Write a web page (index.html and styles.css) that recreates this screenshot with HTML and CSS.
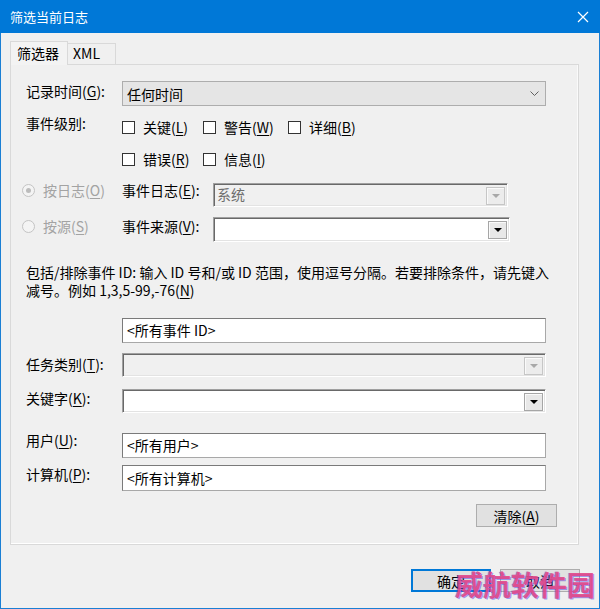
FILE: index.html
```html
<!DOCTYPE html>
<html lang="zh-CN">
<head>
<meta charset="utf-8">
<title>筛选当前日志</title>
<link rel="stylesheet" href="styles.css">
</head>
<body>
<div class="window">
  <div class="titlebar">
    <span class="title">筛选当前日志</span>
    <svg class="close" width="12" height="12" viewBox="0 0 12 12"><path d="M1 1L11 11M11 1L1 11" stroke="#fff" stroke-width="1.2" fill="none"/></svg>
  </div>
  <div class="body">
    <div class="tabs">
      <div class="tab active">筛选器</div>
      <div class="tab">XML</div>
    </div>
    <div class="panel">
      <div class="row r1">
        <span class="lbl">记录时间(<u>G</u>):</span>
        <div class="combo10 w-full"><span>任何时间</span>
          <svg class="chev" width="9" height="5" viewBox="0 0 9 5"><path d="M0.5 0.5L4.5 4.5L8.5 0.5" stroke="#606060" fill="none"/></svg>
        </div>
      </div>
      <div class="row r2">
        <span class="lbl">事件级别:</span>
        <div class="checks">
          <span class="check w81"><span class="cb"></span>关键(<u>L</u>)</span>
          <span class="check w85"><span class="cb"></span>警告(<u>W</u>)</span>
          <span class="check"><span class="cb"></span>详细(<u>B</u>)</span>
        </div>
      </div>
      <div class="row r3">
        <span class="lbl"></span>
        <div class="checks">
          <span class="check w81"><span class="cb"></span>错误(<u>R</u>)</span>
          <span class="check"><span class="cb"></span>信息(<u>I</u>)</span>
        </div>
      </div>
      <div class="row r4">
        <span class="radio-item"><span class="radio checked"></span>按日志(<u>O</u>)</span>
        <span class="lbl2">事件日志(<u>E</u>):</span>
        <div class="combo disabled w-log"><span class="val">系统</span>
          <span class="dd"><svg width="8" height="4" viewBox="0 0 8 4"><path d="M0 0H8L4 4Z" fill="#a8a8a8"/></svg></span>
        </div>
      </div>
      <div class="row r5">
        <span class="radio-item"><span class="radio"></span>按源(<u>S</u>)</span>
        <span class="lbl2">事件来源(<u>V</u>):</span>
        <div class="combo w-src"><span class="val"></span>
          <span class="dd"><svg width="8" height="4" viewBox="0 0 8 4"><path d="M0 0H8L4 4Z" fill="#000"/></svg></span>
        </div>
      </div>
      <p class="para"><span>包括/排除事件 ID: 输入 ID 号和/或 ID 范围，使用逗号分隔。若要排除条件，请先键入</span><br><span>减号。例如 1,3,5-99,-76(<u>N</u>)</span></p>
      <div class="row r6">
        <span class="lbl"></span>
        <div class="input w-full">&lt;所有事件 ID&gt;</div>
      </div>
      <div class="row r7">
        <span class="lbl">任务类别(<u>T</u>):</span>
        <div class="combo disabled w-full"><span class="val"></span>
          <span class="dd"><svg width="8" height="4" viewBox="0 0 8 4"><path d="M0 0H8L4 4Z" fill="#a8a8a8"/></svg></span>
        </div>
      </div>
      <div class="row r8">
        <span class="lbl">关键字(<u>K</u>):</span>
        <div class="combo w-full"><span class="val"></span>
          <span class="dd"><svg width="8" height="4" viewBox="0 0 8 4"><path d="M0 0H8L4 4Z" fill="#000"/></svg></span>
        </div>
      </div>
      <div class="row r9">
        <span class="lbl">用户(<u>U</u>):</span>
        <div class="input w-full">&lt;所有用户&gt;</div>
      </div>
      <div class="row r10">
        <span class="lbl">计算机(<u>P</u>):</span>
        <div class="input w-full">&lt;所有计算机&gt;</div>
      </div>
      <div class="row r11">
        <button class="btn clear">清除(<u>A</u>)</button>
      </div>
    </div>
    <div class="footer">
      <button class="btn default">确定</button>
      <button class="btn">取消</button>
    </div>
  </div>
  <div class="watermark">威航软件园</div>
</div>
</body>
</html>
```

FILE: styles.css
```css
* { box-sizing: border-box; }
html, body { margin: 0; padding: 0; }
body {
  width: 600px;
  height: 609px;
  overflow: hidden;
  background: #f0f0f0;
  font-family: "Noto Sans CJK SC", "Noto Sans", sans-serif;
  font-size: 14px;
  color: #000;
}
u { text-decoration: underline; text-underline-offset: 2px; }

.window {
  position: relative;
  width: 600px;
  height: 609px;
  border: 1px solid #1a7fd4;
  border-top: none;
  background: #f0f0f0;
}

.titlebar {
  height: 33px;
  margin: 0 -1px;
  background: #0078d7;
  display: flex;
  align-items: center;
  justify-content: space-between;
  padding: 0 11px 0 10px;
}
.title { color: #fff; font-size: 13px; line-height: 16px; }
.close { display: block; }

.body { padding: 8px 20px 0 9px; }

.tabs {
  display: flex;
  align-items: flex-end;
  height: 23px;
  position: relative;
  z-index: 1;
}
.tab {
  height: 21px;
  padding: 0 5px;
  border: 1px solid #d9d9d9;
  border-bottom: none;
  background: #f0f0f0;
  line-height: 19px;
  font-size: 14px;
}
.tab.active {
  height: 24px;
  margin-bottom: -1px;
  width: 58px;
  padding: 0 6px;
  line-height: 22px;
  background: #f3f3f3;
  border-color: #d9d9d9;
}
.tab + .tab { width: 48px; border-left: none; }

.panel {
  width: 569px;
  border: 1px solid #d9d9d9;
  box-shadow: inset 0 -1px 0 #ffffff, inset -1px 0 0 #fafafa;
  padding: 16px 21px 17px 15px;
  display: flex;
  flex-direction: column;
}

.row { display: flex; align-items: flex-start; }
.lbl { width: 96px; flex-shrink: 0; white-space: nowrap; }
.lbl2 { width: 91px; flex-shrink: 0; white-space: nowrap; }

.r1 { height: 25px; }
.r1 .lbl { line-height: 20px; }
.r2 { height: 20px; margin-top: 11px; align-items: center; }
.r2 .lbl { align-self: flex-start; line-height: 12px; }
.r3 { height: 20px; margin-top: 12px; align-items: center; }
.r4 { height: 24px; margin-top: 14px; }
.r4 .radio-item, .r4 .lbl2 { height: 15px; line-height: 15px; }
.r4 .combo { align-items: flex-start; }
.r4 .combo .val { line-height: 16px; }
.r4 .combo .dd { align-self: center; }
.r5 { height: 25px; margin-top: 10px; }
.r5 .radio-item, .r5 .lbl2 { height: 18px; line-height: 18px; }
.r6 { height: 25px; margin-top: 19px; }
.r7 { height: 24px; margin-top: 10px; }
.r7 .lbl { line-height: 22px; }
.r8 { height: 24px; margin-top: 12px; }
.r8 .lbl { line-height: 18px; }
.r9 { height: 25px; margin-top: 20px; }
.r9 .lbl { line-height: 14px; }
.r10 { height: 26px; margin-top: 7px; }
.r10 .lbl { line-height: 18px; }
.r11 { height: 23px; margin-top: 13px; justify-content: flex-end; }

.w-full { width: 424px; }
.w-log { width: 295px; }
.w-src { width: 297px; }

.combo10 {
  height: 25px;
  background: #e5e5e5;
  border: 1px solid #adadad;
  display: flex;
  align-items: center;
  justify-content: space-between;
  padding: 0 6px 0 4px;
  line-height: 18px;
}
.chev { display: block; }

.checks { display: flex; align-items: center; }
.check { display: flex; align-items: center; white-space: nowrap; line-height: 18px; }
.w81 { width: 81px; }
.w85 { width: 85px; }
.cb {
  width: 13px;
  height: 13px;
  border: 1px solid #333;
  background: #fff;
  margin-right: 8px;
  flex-shrink: 0;
}

.radio-item {
  width: 100px;
  margin-left: -4px;
  flex-shrink: 0;
  display: flex;
  align-items: center;
  color: #a3a3a3;
  white-space: nowrap;
}
.radio {
  width: 13px;
  height: 13px;
  border: 1px solid #c4c4c4;
  border-radius: 50%;
  background: #f4f4f4;
  margin-right: 8px;
  display: flex;
  align-items: center;
  justify-content: center;
}
.radio.checked::after {
  content: "";
  width: 5px;
  height: 5px;
  border-radius: 50%;
  background: #bcbcbc;
}

.combo {
  height: 24px;
  display: flex;
  align-items: center;
  background: #fff;
  border: 1px solid;
  border-color: #a0a0a0 #ffffff #ffffff #a0a0a0;
  box-shadow: inset 1px 1px 0 #696969, inset -1px -1px 0 #e3e3e3;
  padding: 2px 2px 1px 3px;
}
.r5 .combo { height: 25px; }
.combo.disabled { background: #f0f0f0; }
.combo .val { flex: 1; color: #6d6d6d; line-height: 18px; }
.dd {
  width: 19px;
  height: 18px;
  background: #e8e8e8;
  border: 1px solid #a6a6a6;
  box-shadow: inset 1px 1px 0 #fafafa;
  display: flex;
  align-items: center;
  justify-content: center;
}
.combo.disabled .dd { border-color: #c6c6c6; background: #ececec; }
.dd svg { display: block; }

.para {
  margin: 21px 0 0 0;
  line-height: 18px;
  white-space: nowrap;
}

.input {
  height: 25px;
  background: #fff;
  border: 1px solid #7a7a7a;
  border-color: #7a7a7a #a8a8a8 #a8a8a8 #7a7a7a;
  padding: 0 4px;
  line-height: 23px;
  white-space: nowrap;
}
.r10 .input { height: 26px; line-height: 24px; }

.btn {
  font-family: inherit;
  font-size: 14px;
  color: #000;
  height: 23px;
  width: 80px;
  padding: 0;
  background: #e1e1e1;
  border: 1px solid #adadad;
  line-height: 20px;
}
.btn.clear { width: 81px; }

.footer {
  display: flex;
  justify-content: flex-end;
  gap: 9px;
  margin-top: 24px;
  margin-right: -1px;
}
.btn.default { border: 2px solid #0078d7; }

.watermark {
  position: absolute;
  left: 454px;
  top: 566px;
  font-size: 28px;
  font-weight: bold;
  line-height: 36px;
  color: rgba(236, 72, 132, 0.85);
  text-shadow: 1px 1px 0 rgba(90, 80, 230, 0.55), -1px 0 0 rgba(90, 80, 230, 0.45);
  white-space: nowrap;
}
```
